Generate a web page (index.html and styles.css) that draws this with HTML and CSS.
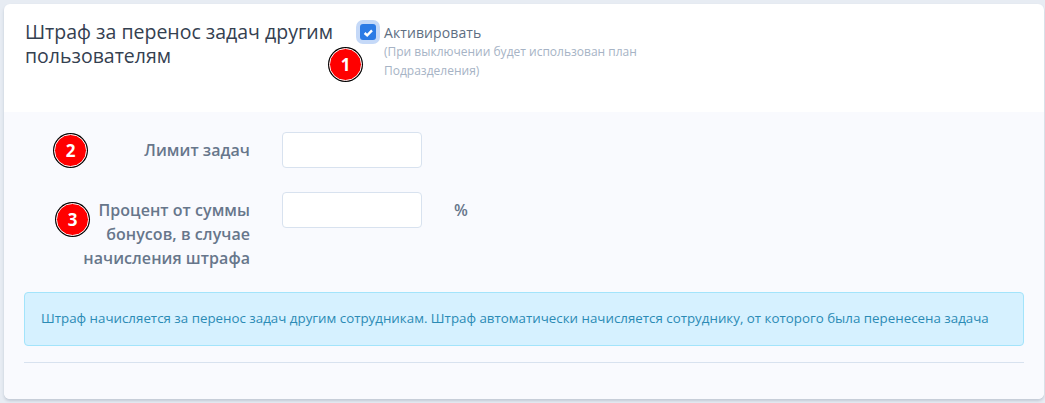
FILE: index.html
```html
<!DOCTYPE html>
<html lang="ru">
<head>
<meta charset="utf-8">
<title>Штраф</title>
<link rel="stylesheet" href="styles.css">
</head>
<body>
<div class="card">
  <header class="card-head">
    <h2 class="title">Штраф за перенос задач другим пользователям</h2>
    <div class="activate">
      <span class="check">
        <svg viewBox="0 0 16 16" width="16" height="16"><path d="M4.6 8 7.2 10.4 12 5.4" fill="none" stroke="#fff" stroke-width="2.4"/></svg>
      </span>
      <div class="activate-text">
        <div class="activate-label">Активировать</div>
        <div class="activate-hint">(При выключении будет использован план Подразделения)</div>
      </div>
    </div>
    <span class="badge badge-1">1</span>
  </header>
  <div class="card-body">
    <div class="row">
      <label class="label">Лимит задач</label>
      <input class="field" type="text">
    </div>
    <div class="row row-second">
      <label class="label">Процент от суммы бонусов, в случае начисления штрафа</label>
      <input class="field" type="text">
      <span class="unit">%</span>
    </div>
    <div class="alert">Штраф начисляется за перенос задач другим сотрудникам. Штраф автоматически начисляется сотруднику, от которого была перенесена задача</div>
    <hr class="rule">
    <span class="badge badge-2">2</span>
    <span class="badge badge-3">3</span>
  </div>
</div>
</body>
</html>
```
FILE: styles.css
```css
* { box-sizing: border-box; }
html, body { height: 100%; }
body {
  margin: 0;
  padding: 4px 1px 4px 4px;
  background: #e7ecf3;
  font-family: "Open Sans", "Noto Sans", sans-serif;
  color: #5e6e82;
  overflow: hidden;
}
.card {
  position: relative;
  height: 395px;
  border-radius: 6px;
  background: #fff;
  box-shadow: 0 2px 3px rgba(65, 84, 110, 0.22);
}
.card-head {
  display: flex;
  height: 108px;
  padding: 16px 20px 0 21px;
}
.title {
  width: 335px;
  margin: 0;
  font-size: 19.5px;
  line-height: 24px;
  font-weight: 500;
  color: #344050;
}
.activate {
  display: flex;
  gap: 8px;
  width: 290px;
  padding-top: 4px;
}
.check {
  flex: none;
  width: 16px;
  height: 16px;
  border-radius: 3px;
  background: #2c7be5;
  box-shadow: 0 0 0 4px #c5d9f8;
}
.activate-label {
  font-size: 14px;
  line-height: 18px;
  font-weight: 500;
  letter-spacing: 0.1px;
}
.activate-hint {
  margin-top: 1px;
  font-size: 12px;
  line-height: 18.6px;
  color: #a6b3c5;
}
.card-body {
  height: 287px;
  padding: 20px 20px 0;
  background: #f9fafe;
  border-radius: 0 0 6px 6px;
}
.row {
  display: flex;
  align-items: flex-start;
}
.row-second { margin-top: 24px; }
.label {
  width: 226px;
  padding: 6px 0 0 46px;
  font-size: 16px;
  line-height: 24px;
  font-weight: 600;
  letter-spacing: 0.05px;
  color: #67768b;
  text-align: right;
}
.field {
  width: 140px;
  height: 36px;
  margin-left: 32px;
  border: 1px solid #d8e2ef;
  border-radius: 4px;
  background: #fff;
}
.unit {
  margin-left: 32px;
  padding-top: 6px;
  font-size: 16px;
  line-height: 24px;
  font-weight: 600;
  color: #67768b;
}
.alert {
  height: 54px;
  margin-top: 22px;
  padding: 16px 16px 0;
  border: 1px solid #a3e4fb;
  border-radius: 4px;
  background: #d6f1ff;
  color: #2b8bb5;
  font-size: 13.33px;
  line-height: 18px;
}
.rule {
  height: 1px;
  margin: 16px 0 0;
  border: 0;
  background: #d8e2ef;
}
.badge {
  position: absolute;
  display: flex;
  align-items: center;
  justify-content: center;
  width: 33px;
  height: 33px;
  border-radius: 50%;
  background: #f00;
  border: 1px solid #fff;
  box-shadow: 0 0 0 1px #000;
  color: #fff;
  font-size: 17px;
  font-weight: 700;
}
.badge-1 { left: 325px; top: 44px; }
.badge-2 { left: 50px; top: 130px; }
.badge-3 { left: 52px; top: 199px; }
```
